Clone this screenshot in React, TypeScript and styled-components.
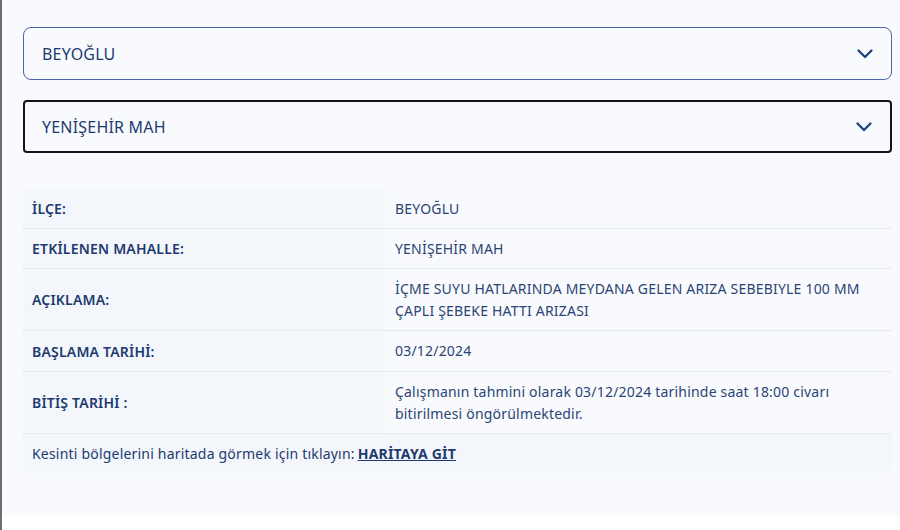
import * as React from 'react'
import styled, { createGlobalStyle } from 'styled-components'

const GlobalStyle = createGlobalStyle`
  html, body {
    margin: 0;
    padding: 0;
    background: #ffffff;
  }
  body {
    font-family: 'Noto Sans', Lato, sans-serif;
  }
`

const colors = {
  page: '#f9fafd',
  labelBg: '#f3f6fb',
  line: '#e6e9ef',
  text: '#1d3a70',
  value: '#2b4474',
}

const Frame = styled.div`
  display: flex;
  height: 530px;
  border-left: 2px solid #6e6e6e;
`

const Panel = styled.div`
  flex: 1;
  height: 516px;
  background: ${colors.page};
  padding: 27px 8px 0 21px;
  box-sizing: border-box;
  display: flex;
  flex-direction: column;
`

const Select = styled.div<{ $focused?: boolean }>`
  height: 53px;
  box-sizing: border-box;
  display: flex;
  align-items: center;
  justify-content: space-between;
  padding: 0 18px 0 ${p => (p.$focused ? 17 : 18)}px;
  border: ${p => (p.$focused ? '2px solid #151515' : '1px solid #4868a8')};
  border-radius: ${p => (p.$focused ? 4 : 8)}px;
  color: ${colors.text};
  font-size: 16px;
  letter-spacing: 0.2px;
  margin-bottom: ${p => (p.$focused ? 36 : 20)}px;
`

const Chevron = () => (
  <svg width="16" height="10" viewBox="0 0 16 10" fill="none">
    <polyline points="1.5,1.5 8,8 14.5,1.5" stroke="#173f7c" strokeWidth="2.2" strokeLinecap="round" strokeLinejoin="round" />
  </svg>
)

const Table = styled.div`
  border-radius: 9px;
  overflow: hidden;
  display: grid;
  grid-template-columns: 362px 1fr;
  font-size: 14px;
  letter-spacing: 0.2px;
`

const Label = styled.div<{ $h: number }>`
  background: ${colors.labelBg};
  min-height: ${p => p.$h}px;
  box-sizing: border-box;
  display: flex;
  align-items: center;
  padding: 0 9px;
  font-weight: 600;
  color: ${colors.text};
  border-bottom: 1px solid ${colors.line};
`

const Value = styled.div<{ $h: number }>`
  min-height: ${p => p.$h}px;
  box-sizing: border-box;
  display: flex;
  align-items: center;
  padding: 0 10px;
  color: ${colors.value};
  line-height: 22px;
  border-bottom: 1px solid ${colors.line};
`

const Footer = styled.div`
  grid-column: 1 / span 2;
  background: ${colors.labelBg};
  height: 39px;
  display: flex;
  align-items: center;
  padding: 0 9px;
  color: ${colors.text};
`

const MapLink = styled.a`
  margin-left: 3px;
  font-weight: 700;
  color: ${colors.text};
  text-decoration: underline;
`

const rows = [
  { label: 'İLÇE:', value: 'BEYOĞLU', h: 40 },
  { label: 'ETKİLENEN MAHALLE:', value: 'YENİŞEHİR MAH', h: 40 },
  {
    label: 'AÇIKLAMA:',
    value: 'İÇME SUYU HATLARINDA MEYDANA GELEN ARIZA SEBEBIYLE 100 MM ÇAPLI ŞEBEKE HATTI ARIZASI',
    h: 62,
  },
  { label: 'BAŞLAMA TARİHİ:', value: '03/12/2024', h: 41 },
  {
    label: 'BİTİŞ TARİHİ :',
    value: 'Çalışmanın tahmini olarak 03/12/2024 tarihinde saat 18:00 civarı bitirilmesi öngörülmektedir.',
    h: 62,
  },
]

export default function App() {
  return (
    <>
      <GlobalStyle />
      <Frame>
        <Panel>
          <Select>
            <span>BEYOĞLU</span>
            <Chevron />
          </Select>
          <Select $focused>
            <span>YENİŞEHİR MAH</span>
            <Chevron />
          </Select>
          <Table>
            {rows.map(r => (
              <React.Fragment key={r.label}>
                <Label $h={r.h}>{r.label}</Label>
                <Value $h={r.h}>{r.value}</Value>
              </React.Fragment>
            ))}
            <Footer>
              Kesinti bölgelerini haritada görmek için tıklayın:
              <MapLink href="#">HARİTAYA GİT</MapLink>
            </Footer>
          </Table>
        </Panel>
      </Frame>
    </>
  )
}
